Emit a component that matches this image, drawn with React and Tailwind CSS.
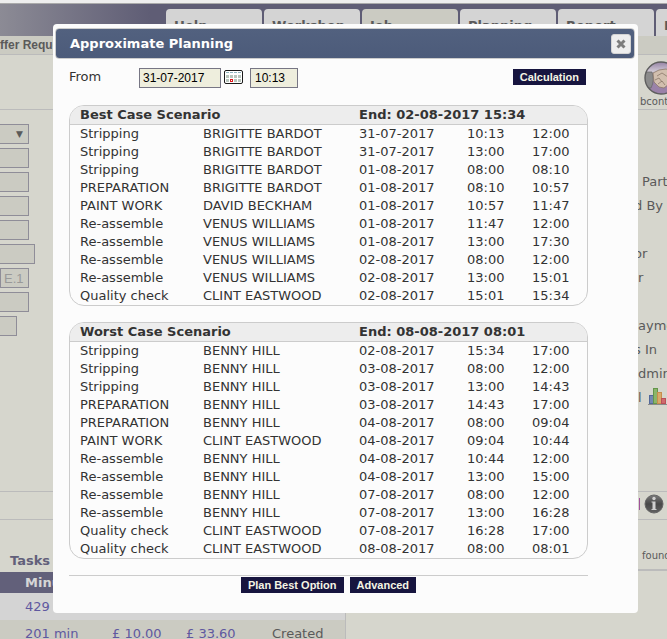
import React from 'react';
import { clsx } from 'clsx';

const tabs = ['Help', 'Workshop', 'Job', 'Planning', 'Report', 'Finance'];

const formFields = [
  { name: 'type', select: true, width: 'w-[29px]' },
  { name: 'brand', width: 'w-[29px]' },
  { name: 'model', width: 'w-[29px]' },
  { name: 'year', width: 'w-[29px]' },
  { name: 'color', width: 'w-[29px]' },
  { name: 'chassis', width: 'w-[35px]' },
  { name: 'engine', width: 'w-[29px] border-l', value: 'E.1' },
  { name: 'mileage', width: 'w-[29px]' },
  { name: 'doors', width: 'w-[17px]' },
];

const sideLabels = [
  { text: 'Party', indent: 'pl-2' },
  { text: 'd By', indent: 'pl-0' },
  { text: '', indent: 'pl-0' },
  { text: 'or', indent: 'pl-0' },
  { text: 'r', indent: 'pl-1' },
  { text: '', indent: 'pl-0' },
  { text: 'ayment', indent: 'pl-1' },
  { text: 's In', indent: 'pl-0' },
  { text: 'dmin', indent: 'pl-1' },
  { text: 'l', indent: 'pl-1', chart: true },
];

const scenarios = [
  {
    title: 'Best Case Scenario',
    end: 'End: 02-08-2017 15:34',
    rows: [
      ['Stripping', 'BRIGITTE BARDOT', '31-07-2017', '10:13', '12:00'],
      ['Stripping', 'BRIGITTE BARDOT', '31-07-2017', '13:00', '17:00'],
      ['Stripping', 'BRIGITTE BARDOT', '01-08-2017', '08:00', '08:10'],
      ['PREPARATION', 'BRIGITTE BARDOT', '01-08-2017', '08:10', '10:57'],
      ['PAINT WORK', 'DAVID BECKHAM', '01-08-2017', '10:57', '11:47'],
      ['Re-assemble', 'VENUS WILLIAMS', '01-08-2017', '11:47', '12:00'],
      ['Re-assemble', 'VENUS WILLIAMS', '01-08-2017', '13:00', '17:30'],
      ['Re-assemble', 'VENUS WILLIAMS', '02-08-2017', '08:00', '12:00'],
      ['Re-assemble', 'VENUS WILLIAMS', '02-08-2017', '13:00', '15:01'],
      ['Quality check', 'CLINT EASTWOOD', '02-08-2017', '15:01', '15:34'],
    ],
  },
  {
    title: 'Worst Case Scenario',
    end: 'End: 08-08-2017 08:01',
    rows: [
      ['Stripping', 'BENNY HILL', '02-08-2017', '15:34', '17:00'],
      ['Stripping', 'BENNY HILL', '03-08-2017', '08:00', '12:00'],
      ['Stripping', 'BENNY HILL', '03-08-2017', '13:00', '14:43'],
      ['PREPARATION', 'BENNY HILL', '03-08-2017', '14:43', '17:00'],
      ['PREPARATION', 'BENNY HILL', '04-08-2017', '08:00', '09:04'],
      ['PAINT WORK', 'CLINT EASTWOOD', '04-08-2017', '09:04', '10:44'],
      ['Re-assemble', 'BENNY HILL', '04-08-2017', '10:44', '12:00'],
      ['Re-assemble', 'BENNY HILL', '04-08-2017', '13:00', '15:00'],
      ['Re-assemble', 'BENNY HILL', '07-08-2017', '08:00', '12:00'],
      ['Re-assemble', 'BENNY HILL', '07-08-2017', '13:00', '16:28'],
      ['Quality check', 'CLINT EASTWOOD', '07-08-2017', '16:28', '17:00'],
      ['Quality check', 'CLINT EASTWOOD', '08-08-2017', '08:00', '08:01'],
    ],
  },
];

const HandshakeIcon = () => (
  <svg className="h-[34px] w-[34px] shrink-0" viewBox="0 0 34 34">
    <defs>
      <clipPath id="badge">
        <circle cx="17" cy="17" r="16" />
      </clipPath>
      <linearGradient id="badgeFill" x1="0" y1="0" x2="0" y2="1">
        <stop offset="0" stopColor="#8f7ba0" />
        <stop offset="0.3" stopColor="#cfc8d4" />
        <stop offset="0.6" stopColor="#9a84a8" />
        <stop offset="1" stopColor="#9a80a8" />
      </linearGradient>
    </defs>
    <g clipPath="url(#badge)">
      <rect width="34" height="34" fill="url(#badgeFill)" />
      <path d="M0 11 L8 11 Q11 19 7 27 L0 27 Z" fill="#8b8b8b" stroke="#666" strokeWidth="0.7" />
      <path
        d="M9 12 L15 9 L22 8 L34 12 L34 23 L25 23 L20 27 L15 26 L10 21 Z"
        fill="#d2bfae"
        stroke="#8c7869"
        strokeWidth="0.8"
      />
      <path d="M13 15 L18 12 L24 16 L28 20 M11 19 L15 17 L18 21 M14 23 L18 20 L21 24" fill="none" stroke="#8c7869" strokeWidth="0.8" />
    </g>
    <circle cx="17" cy="17" r="16" fill="none" stroke="#5e5e5e" strokeWidth="1.4" />
  </svg>
);

const ChartIcon = () => (
  <svg className="h-[18px] w-[20px] shrink-0" viewBox="0 0 20 18">
    <rect x="1.5" y="8.5" width="4" height="8" fill="#7488b0" stroke="#52699a" />
    <rect x="5.5" y="1.5" width="4" height="15" fill="#8bb569" stroke="#63964a" />
    <rect x="9.5" y="5.5" width="4" height="11" fill="#d8a96a" stroke="#c78d4c" />
    <rect x="13.5" y="11.5" width="4" height="5" fill="#cf6a6e" stroke="#bb4f58" />
    <path d="M0 17.5 H20" stroke="#8a8a8a" />
  </svg>
);

const InfoIcon = () => (
  <svg className="h-5 w-5 shrink-0" viewBox="0 0 20 20">
    <defs>
      <linearGradient id="infoFill" x1="0" y1="0" x2="0" y2="1">
        <stop offset="0" stopColor="#7b7b7b" />
        <stop offset="0.5" stopColor="#484848" />
        <stop offset="1" stopColor="#626262" />
      </linearGradient>
    </defs>
    <circle cx="10" cy="10" r="9" fill="url(#infoFill)" stroke="#666" />
    <circle cx="10" cy="4.5" r="1.7" fill="#d0d0d0" />
    <path d="M7.5 7.5 H11.5 V15 H12.5 V16 H7.5 V15 H8.5 V8.5 H7.5 Z" fill="#d0d0d0" />
  </svg>
);

const CalendarIcon = () => (
  <svg className="h-[14px] w-[19px]" viewBox="0 0 19 14">
    <rect x="0.5" y="0.5" width="18" height="13" rx="1.5" fill="#fff" stroke="#1a1a1a" />
    <path d="M2 2.5 H17" stroke="#8fb4bf" strokeDasharray="3 1" />
    {[5, 9].map((y) =>
      [2, 6, 10, 14].map((x) => (
        <rect key={`${x}-${y}`} x={x} y={y} width="3" height="3" fill="#b9c6bd" />
      ))
    )}
    <rect x="6.5" y="9.5" width="2" height="2" fill="#fff" stroke="#e0161b" />
  </svg>
);

const CloseIcon = () => (
  <svg className="h-[10px] w-[10px]" viewBox="0 0 10 10">
    <path d="M1.5 1.5 L8.5 8.5 M8.5 1.5 L1.5 8.5" stroke="#7d7d7d" strokeWidth="3" />
  </svg>
);

const ActionButton = ({ children }) => (
  <button
    type="button"
    className="h-4 bg-[#17153f] px-[7px] font-['Liberation_Sans',sans-serif] text-[11px] leading-4 font-bold whitespace-nowrap text-[#f4f4e4]"
  >
    {children}
  </button>
);

const ScenarioTable = ({ title, end, rows }) => (
  <div className="overflow-hidden rounded-[15px] border border-[#ccc]">
    <table className="w-full table-fixed border-separate border-spacing-0 text-left whitespace-nowrap">
      <colgroup>
        <col className="w-[133px]" />
        <col className="w-[156px]" />
        <col className="w-[108px]" />
        <col className="w-[65px]" />
        <col />
      </colgroup>
      <thead>
        <tr className="bg-[#ededed] leading-[18px]">
          <th colSpan={2} className="border-b border-[#ccc] p-0 pl-[10px] font-bold">{title}</th>
          <th colSpan={3} className="border-b border-[#ccc] p-0 font-bold">{end}</th>
        </tr>
      </thead>
      <tbody>
        {rows.map((row, index) => (
          <tr key={index} className="leading-[18px]">
            {row.map((cell, i) => (
              <td key={i} className="p-0 first:pl-[10px]">{cell}</td>
            ))}
          </tr>
        ))}
      </tbody>
    </table>
  </div>
);

const PlanningDialog = () => (
  <div
    role="dialog"
    aria-labelledby="dialog-title"
    className="w-full rounded-[4px] bg-[#fcfcfc] pt-1 pr-[3px] pb-5 pl-[2px] text-[#333]"
  >
    <div className="flex h-[31px] items-center justify-between rounded-[4px] border border-[#ccc] bg-linear-to-b from-[#52617f] to-[#4c5b7a] pr-[3px] pl-[14px]">
      <h1 id="dialog-title" className="font-bold text-white">Approximate Planning</h1>
      <button
        type="button"
        aria-label="Close"
        className="flex h-5 w-5 items-center justify-center rounded-[3px] border border-[#d3d3d3] bg-[#eee]"
      >
        <CloseIcon />
      </button>
    </div>

    <div className="pr-[47px] pl-[14px]">
      <form className="flex h-[46px] items-center pb-[10px]">
        <label htmlFor="from-date" className="w-[70px]">From</label>
        <input
          id="from-date"
          defaultValue="31-07-2017"
          className="mt-[2px] h-5 w-[82px] border border-[#777684] bg-[#eeeedd] px-[3px] font-['Liberation_Sans',sans-serif] text-xs text-black"
        />
        <button type="button" aria-label="Pick a date" className="mr-[7px] ml-[3px]">
          <CalendarIcon />
        </button>
        <input
          aria-label="Time"
          defaultValue="10:13"
          className="mt-[2px] h-5 w-12 border border-[#777684] bg-[#eeeedd] px-1 font-['Liberation_Sans',sans-serif] text-xs text-black"
        />
        <div className="mr-[2px] ml-auto flex">
          <ActionButton>Calculation</ActionButton>
        </div>
      </form>

      <div className="flex flex-col gap-4">
        {scenarios.map((scenario) => (
          <ScenarioTable key={scenario.title} {...scenario} />
        ))}
      </div>

      <div className="mt-4 flex justify-center gap-[6px] border-t border-[#ccc] pt-px">
        <ActionButton>Plan Best Option</ActionButton>
        <ActionButton>Advanced</ActionButton>
      </div>
    </div>
  </div>
);

const App = () => {
  return (
    <div className="relative h-screen overflow-hidden bg-[#d6d6cd] font-['DejaVu_Sans',Verdana,sans-serif] text-[13px] text-[#5a5a5a]">
      <div className="h-1 border-b border-[#aaa] bg-[#eee]" />

      {/* Main navigation */}
      <nav className="flex h-8 items-end gap-[2px] overflow-hidden bg-[#5f5d75] bg-linear-to-r from-[#8c8b95] to-[#5f5d75] to-[150px] pl-[166px]">
        {tabs.map((tab) => (
          <a
            key={tab}
            href="#"
            className={clsx(
              'h-[27px] w-24 shrink-0 rounded-t-[4px] px-2 pt-[7px] font-bold',
              tab === 'Job' ? 'bg-[#cbcbc2]' : 'bg-[#d4d4d4]'
            )}
          >
            {tab}
          </a>
        ))}
      </nav>
      <div className="h-[19px] border-b border-[#bbb] bg-[#cbcbc2] font-['Liberation_Sans',sans-serif] text-xs leading-[18px] font-bold">
        ffer Request
      </div>

      {/* Toolbar */}
      <div className="flex h-[55px] justify-end overflow-hidden border-b border-[#bbb] pt-[6px]">
        <div className="flex w-[27px] flex-col overflow-hidden text-[10px] leading-3 whitespace-nowrap">
          <div className="pl-1">
            <HandshakeIcon />
          </div>
          <span className="pt-px">bcontract</span>
        </div>
      </div>

      {/* Job details */}
      <div className="flex h-[381px] items-start justify-between pt-[14px]">
        <div className="flex flex-col items-start gap-1">
          {formFields.map((field) =>
            field.select ? (
              <div key={field.name} className="relative flex">
                <select
                  aria-label={field.name}
                  className={clsx('h-5 appearance-none border border-l-0 border-[#8f8d98] bg-[#cbcbc2]', field.width)}
                />
                <span className="pointer-events-none absolute top-0 right-[6px] text-[9px] leading-5">▼</span>
              </div>
            ) : (
              <input
                key={field.name}
                aria-label={field.name}
                defaultValue={field.value}
                className={clsx(
                  "h-5 border-y border-r border-[#8f8d98] bg-[#cbcbc2] px-[3px] font-['Liberation_Sans',sans-serif] text-[#999]",
                  field.width
                )}
              />
            )
          )}
        </div>
        <div className="w-[33px] overflow-hidden pt-[46px] leading-6 whitespace-nowrap">
          {sideLabels.map((label, index) => (
            <div key={index} className={clsx('flex h-6 items-center', label.indent)}>
              {label.text}
              {label.chart && (
                <span className="pb-1 pl-[6px]">
                  <ChartIcon />
                </span>
              )}
            </div>
          ))}
        </div>
      </div>

      <div className="flex h-[29px] items-center justify-end border-y border-[#bbb] pr-[3px] pb-[3px]">
        <span className="mr-1 h-3 w-px bg-[#a0529a]" />
        <InfoIcon />
      </div>

      {/* Tasks */}
      <div className="flex justify-between">
        <div className="w-[346px]">
          <h2 className="h-[52px] pt-[31px] pl-[10px] font-bold text-[#62607a]">Tasks</h2>
          <table className="w-full table-fixed border-r border-[#bbb] text-left whitespace-nowrap">
            <colgroup>
              <col className="w-[112px]" />
              <col className="w-[74px]" />
              <col className="w-[86px]" />
              <col />
            </colgroup>
            <thead>
              <tr className="h-[21px] bg-[#62607a] text-[#d6d6d6]">
                <th className="p-0 pl-[25px]">Minutes</th>
                <th />
                <th />
                <th />
              </tr>
            </thead>
            <tbody className="text-[#5f58a0]">
              <tr className="h-[27px] bg-[#d4d4d4]">
                <td className="p-0 pl-[25px]">429</td>
                <td />
                <td />
                <td />
              </tr>
              <tr className="h-[27px] bg-[#cbcbc2]">
                <td className="p-0 pl-[25px]">201 min</td>
                <td className="p-0">£ 10.00</td>
                <td className="p-0">£ 33.60</td>
                <td className="p-0 text-[#5a5a5a]">Created</td>
              </tr>
            </tbody>
          </table>
        </div>
        <div className="h-[51px] w-[29px] overflow-hidden border-b-2 border-[#bbb] pt-7 pl-1 text-[10px]">
          found
        </div>
      </div>

      <div className="absolute inset-0 pt-6 pr-[29px] pl-[53px]">
        <PlanningDialog />
      </div>
    </div>
  );
};

export default App;
